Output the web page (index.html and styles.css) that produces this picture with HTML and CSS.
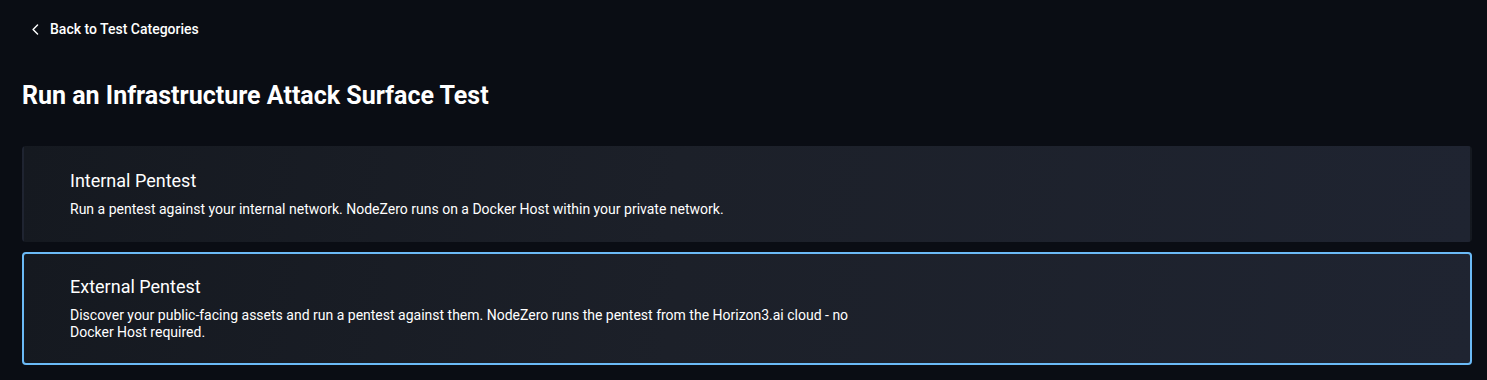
FILE: index.html
```html
<!DOCTYPE html>
<html lang="en">
<head>
    <meta charset="UTF-8">
    <title>Run a Test</title>
<link rel="stylesheet" href="styles.css">
</head>
<body>
    <div class="page">
        <a class="back-link" href="#">
            <svg class="back-icon" viewBox="0 0 16 16" width="16" height="16"><path d="M10.5 2.5 L5 8 L10.5 13.5" fill="none" stroke="currentColor" stroke-width="1.8" stroke-linecap="round" stroke-linejoin="round"/></svg>
            <span>Back to Test Categories</span>
        </a>

        <h1 class="page-title">Run an Infrastructure Attack Surface Test</h1>

        <div class="test-list">
            <div class="test-card">
                <h2>Internal Pentest</h2>
                <p>Run a pentest against your internal network. NodeZero runs on a Docker Host within your private network.</p>
            </div>
            <div class="test-card selected">
                <h2>External Pentest</h2>
                <p>Discover your public-facing assets and run a pentest against them. NodeZero runs the pentest from the Horizon3.ai cloud - no Docker Host required.</p>
            </div>
        </div>
    </div>
</body>
</html>
```

FILE: styles.css
```css
* {
    margin: 0;
    padding: 0;
    box-sizing: border-box;
    font-family: Roboto, 'Liberation Sans', sans-serif;
}

body {
    background-color: #0a0d14;
    color: #ffffff;
}

.page {
    padding: 18px 15px 0 22px;
}

.back-link {
    display: inline-flex;
    align-items: center;
    gap: 8px;
    color: #ffffff;
    text-decoration: none;
    font-size: 14px;
    font-weight: 500;
    padding: 0 7px;
    height: 22px;
}

.back-icon { width: 13px; height: 13px; }

.page-title {
    font-size: 25px;
    font-weight: 700;
    margin-top: 41px;
    line-height: 30px;
}

.test-list {
    display: flex;
    flex-direction: column;
    gap: 10px;
    margin-top: 35px;
}

.test-card {
    background: linear-gradient(100deg, #151920 0%, #1c2029 45%, #1f2431 100%);
    border: 2px solid transparent;
    border-radius: 4px;
    padding: 22px 46px 22px 46px;
}

.test-card.selected { border-color: #6bbaf6; }

.test-card h2 {
    font-size: 18px;
    font-weight: 400;
    line-height: 22px;
    margin-bottom: 9px;
}

.test-card p {
    font-size: 14px;
    line-height: 17px;
    max-width: 800px;
}
```
